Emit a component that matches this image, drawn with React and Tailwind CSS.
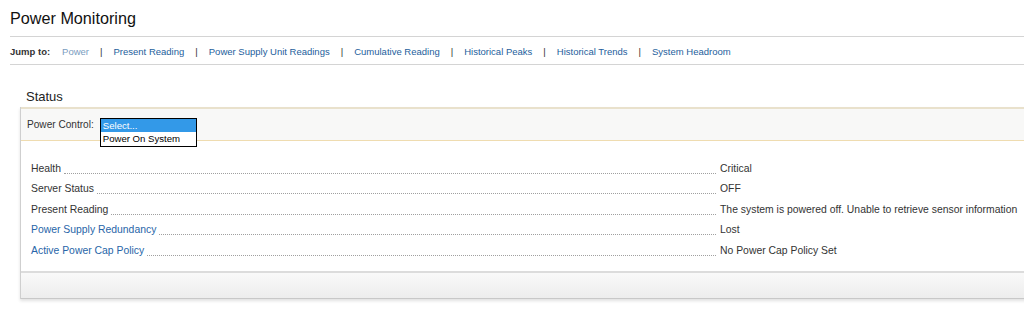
import React from 'react';

const jumpLinks = [
  'Power',
  'Present Reading',
  'Power Supply Unit Readings',
  'Cumulative Reading',
  'Historical Peaks',
  'Historical Trends',
  'System Headroom',
];

const rows = [
  { label: 'Health', value: 'Critical' },
  { label: 'Server Status', value: 'OFF' },
  { label: 'Present Reading', value: 'The system is powered off. Unable to retrieve sensor information' },
  { label: 'Power Supply Redundancy', value: 'Lost', link: true },
  { label: 'Active Power Cap Policy', value: 'No Power Cap Policy Set', link: true },
];

const App = () => {
  return (
    <div className="w-[1024px] h-[312px] overflow-hidden bg-white text-[#333] font-['Liberation_Sans',Arial,sans-serif]">
      {/* Page title */}
      <div className="ml-[10px]">
        <h1 className="pt-[8px] pb-[8px] leading-[20px] text-[16.2px] text-[#111] border-b border-[#d4d4d4]">
          Power Monitoring
        </h1>

        {/* Jump to nav */}
        <div className="h-[28px] pt-[3px] flex items-center text-[9.5px] border-b border-[#d4d4d4]">
          <span className="font-bold text-[#333] mr-[12px]">Jump to:</span>
          {jumpLinks.map((link, i) => (
            <React.Fragment key={link}>
              {i > 0 && <span className="mx-[11px] text-[#333]">|</span>}
              <a className={i === 0 ? 'text-[#7a9cc0]' : 'text-[#245e9c]'}>{link}</a>
            </React.Fragment>
          ))}
        </div>
      </div>

      {/* Status section */}
      <div className="ml-[20px]">
        <h2 className="mt-[24px] mb-[2px] pl-[6px] leading-[16px] text-[13px] text-[#222]">Status</h2>

        <div className="w-[1020px] border-l border-[#cfcfcf] shadow-[0_2px_3px_rgba(0,0,0,0.12)]">
          {/* Header row with power control */}
          <div className="h-[34px] flex items-center pl-[6px] bg-[#f8f8f7] border-t-2 border-b border-t-[#e9e1cc] border-b-[#efdcb0] text-[10.1px]">
            <span className="text-[#333]">Power Control:</span>
            <span className="relative ml-[6px] w-[97px] h-[14px]">
              <div className="absolute left-0 top-0 w-[97px] bg-white border border-black text-[9.6px] leading-[13.5px]">
                <div className="bg-[#3399e8] text-white px-[2px]">Select...</div>
                <div className="text-black px-[2px]">Power On System</div>
              </div>
            </span>
          </div>

          {/* Body rows */}
          <div className="pt-[19px] pb-[8px] pl-[10px] text-[10.4px]">
            {rows.map((row) => (
              <div key={row.label} className="flex items-end h-[20.5px] pb-[4px]">
                <div className="w-[689px] flex items-end">
                  <span className={row.link ? 'text-[#2765a8]' : 'text-[#333]'}>{row.label}</span>
                  <span className="flex-1 ml-[3px] mr-[4px] mb-[3px] border-b border-dotted border-[#a0a0a0]" />
                </div>
                <span className="text-[#333]">{row.value}</span>
              </div>
            ))}
          </div>

          {/* Footer bar */}
          <div className="h-[28px] border-t-2 border-[#dcdcdc] bg-gradient-to-b from-[#f9f9f9] to-[#ededed] border-b border-b-[#c8c8c8]" />
        </div>
      </div>
    </div>
  );
};

export default App;
